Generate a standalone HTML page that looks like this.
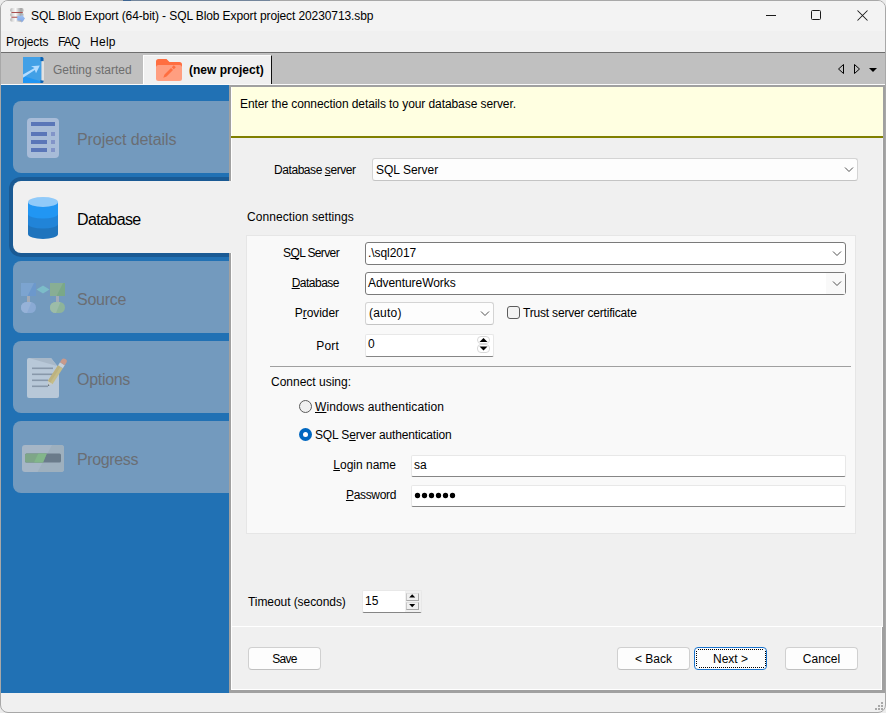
<!DOCTYPE html>
<html><head><meta charset="utf-8">
<style>
*{box-sizing:border-box;margin:0;padding:0}
html,body{width:886px;height:713px;overflow:hidden;background:#ececec;font-family:"Liberation Sans",sans-serif;font-size:12px;color:#000}
.a{position:absolute}
.t{position:absolute;white-space:nowrap;line-height:14px;height:14px}
.r{text-align:right}
#win{left:0;top:0;width:886px;height:713px;border:1px solid #a8a8a8;border-radius:8px;background:#f0f0f0;overflow:hidden}
u{text-decoration:underline;text-decoration-thickness:1px;text-underline-offset:1px;text-decoration-skip-ink:none}
.item{position:absolute;left:13px;width:216px;height:72px;background:#739abe;border-radius:8px 0 0 8px}
.stxt{position:absolute;left:77px;font-size:16px;line-height:18px;color:#6a6e74;white-space:nowrap;letter-spacing:-0.3px}
.combo{position:absolute;background:#fff;border:1px solid #7a7a7a;border-radius:3px}
.combo2{position:absolute;background:#fdfdfd;border:1px solid #d4d4d4;border-bottom-color:#c4c4c4;border-radius:3px}
.edit{position:absolute;background:#fff;border:1px solid #e8e8e8;border-bottom:1px solid #868686;border-radius:2px}
.btn{position:absolute;height:23px;background:#fdfdfd;border:1px solid #d0d0d0;border-bottom-color:#c0c0c0;border-radius:4px;text-align:center;line-height:20px}
.chev{position:absolute;width:10px;height:6px}
</style></head><body>
<div id="win" class="a"></div>
<div class="a" style="left:123px;top:0;width:8px;height:1px;background:#3d6592"></div>
<div class="a" style="left:131px;top:0;width:139px;height:1px;background:#74869c"></div>
<!-- title bar -->
<div class="a" style="left:1px;top:1px;width:884px;height:51px;background:#f3f3f3;border-radius:7px 7px 0 0"></div>
<div class="a" style="left:1px;top:31px;width:884px;height:21px;background:#f0f0f0"></div>
<svg class="a" style="left:8px;top:6px" width="20" height="20" viewBox="0 0 20 20">
  <defs><linearGradient id="disc" x1="0" x2="1"><stop offset="0" stop-color="#b0b0b0"/><stop offset=".18" stop-color="#dcdcdc"/><stop offset=".4" stop-color="#fbfbfb"/><stop offset=".62" stop-color="#c8c8c8"/><stop offset=".8" stop-color="#a4a4a4"/><stop offset="1" stop-color="#c4c4c4"/></linearGradient>
  <linearGradient id="arr" x1="0" y1="0" x2="0" y2="1"><stop offset="0" stop-color="#a8c8f4"/><stop offset="1" stop-color="#7aa2e8"/></linearGradient></defs>
  <rect x="2.2" y="2.1" width="13.5" height="4.2" rx="1.8" fill="url(#disc)"/>
  <rect x="2.2" y="6.9" width="13.5" height="3.8" rx="1.6" fill="url(#disc)"/>
  <rect x="2.2" y="11.8" width="13.5" height="4" rx="1.8" fill="url(#disc)"/>
  <rect x="3.4" y="6" width="11.4" height="1" fill="#a85050"/>
  <rect x="3.4" y="10.7" width="11.4" height="1.1" fill="#b05858"/>
  <path d="M9.3 9.8h4.2V8.1l3.5 4.3-3.5 4.4v-2.2H9.3z" fill="url(#arr)"/>
</svg>
<div class="t" style="letter-spacing:-0.1px;left:31px;top:9px;color:#000">SQL Blob Export (64-bit) - SQL Blob Export project 20230713.sbp</div>
<!-- window buttons -->
<div class="a" style="left:766px;top:15px;width:10px;height:1px;background:#1a1a1a"></div>
<div class="a" style="left:811px;top:10px;width:10px;height:10px;border:1px solid #1a1a1a;border-radius:1.5px"></div>
<svg class="a" style="left:857px;top:10px" width="11" height="11" viewBox="0 0 11 11"><path d="M.5 .5L10.5 10.5M10.5 .5L.5 10.5" stroke="#1a1a1a" stroke-width="1.05"/></svg>
<!-- menu -->
<div class="t" style="letter-spacing:-0.13px;left:6px;top:35px">Projects</div>
<div class="t" style="letter-spacing:-0.85px;left:58px;top:35px">FAQ</div>
<div class="t" style="letter-spacing:0.27px;left:90px;top:35px">Help</div>
<!-- tab bar -->
<div class="a" style="left:1px;top:52px;width:884px;height:1px;background:#6e6e6e"></div>
<div class="a" style="left:1px;top:53px;width:884px;height:31px;background:#c0c0c0"></div>
<div class="a" style="left:1px;top:84px;width:884px;height:1px;background:#fafafa"></div>
<!-- getting started icon -->
<svg class="a" style="left:23px;top:57px" width="22" height="27" viewBox="0 0 22 27">
  <rect x="0" y="0" width="18.5" height="26" fill="#2196f3"/>
  <path d="M0 0h18.5v24.5L0 19z" fill="#42a0e6"/>
  <path d="M17.5 0h1.5a1.5 1.5 0 0 1 1.5 1.5V4h-3z" fill="#0d62b2"/>
  <path d="M17.5 23h3v1.5a1.5 1.5 0 0 1-1.5 1.5h-1.5z" fill="#0d62b2"/>
  <rect x="18.5" y="4.5" width="2.5" height="19" fill="#e2e2e2"/>
  <path d="M0 17.5L11.5 11l-3.5-1.8 8.8-.8-3.8 7.8-1.2-3.2L0 20.8z" fill="#b3dcff"/>
</svg>
<div class="t" style="left:53px;top:63px;color:#6e6e6e">Getting started</div>
<!-- active tab -->
<div class="a" style="left:143px;top:55px;width:129px;height:29px;background:#f0f0f0;border-left:1px solid #fff;border-top:1px solid #fafafa;border-right:1px solid #101010"></div>
<svg class="a" style="left:156px;top:59px" width="26" height="22" viewBox="0 0 26 22">
  <path d="M0 2.5a2.5 2.5 0 0 1 2.5-2.5h8l3 3h10a2.5 2.5 0 0 1 2.5 2.5V8H0z" fill="#ff6e40"/>
  <rect x="0" y="6" width="26" height="16" rx="2.5" fill="#ff9e80"/>
  <path d="M10.5 17.5L17 11 15 9 8.5 15.5z M10.5 17.5L8.5 15.5 7.3 18.7z M17.8 10.2L19.8 8.2 17.8 6.2 15.8 8.2z" fill="#ff6e40"/>
</svg>
<div class="t" style="left:189px;top:63px;font-weight:bold">(new project)</div>
<!-- tab arrows -->
<svg class="a" style="left:836px;top:63px" width="44" height="12" viewBox="0 0 44 12">
  <path d="M7.5 1.5v9L2.5 6z" fill="none" stroke="#000" stroke-width="1"/>
  <path d="M18.5 1.5v9l5-4.5z" fill="none" stroke="#000" stroke-width="1"/>
  <path d="M33 5h8l-4 4z" fill="#000"/>
</svg>
<!-- sidebar -->
<div class="a" style="left:1px;top:85px;width:228px;height:608px;background:#2171b4"></div>
<div class="item" style="top:101px"></div>
<div class="a" style="left:9px;top:177px;width:230px;height:80px;background:#1a5a94;border-radius:12px 0 0 12px"></div>
<div class="item" style="top:181px;background:#f0f0f0;width:220px"></div>
<div class="item" style="top:261px"></div>
<div class="item" style="top:341px"></div>
<div class="item" style="top:421px"></div>
<!-- icons -->
<svg class="a" style="left:27px;top:118px" width="32" height="40" viewBox="0 0 32 40">
  <rect width="32" height="40" rx="4" fill="#a8bcd8"/>
  <rect x="4" y="4" width="24" height="4" fill="#5a76b8"/>
  <rect x="4" y="14" width="16" height="4" fill="#5a76b8"/>
  <rect x="4" y="22" width="16" height="4" fill="#5a76b8"/>
  <rect x="4" y="30" width="16" height="4" fill="#5a76b8"/>
  <rect x="24" y="14" width="4" height="4" fill="#8294c8"/>
  <rect x="24" y="22" width="4" height="4" fill="#8294c8"/>
  <rect x="24" y="30" width="4" height="4" fill="#8294c8"/>
</svg>
<svg class="a" style="left:28px;top:197px" width="30" height="43" viewBox="0 0 30 43">
  <path d="M0 5v32a15 5 0 0 0 30 0V5z" fill="#1f74bd"/>
  <path d="M0 5v22a15 4.5 0 0 0 30 0V5z" fill="#2184d8"/>
  <path d="M0 5v12a15 4.5 0 0 0 30 0V5z" fill="#2196f3"/>
  <ellipse cx="15" cy="5" rx="15" ry="5" fill="#90caf9"/>
</svg>
<svg class="a" style="left:21px;top:283px" width="45" height="30" viewBox="0 0 45 30">
  <rect x="0" y="0" width="15" height="13" fill="#6c98cc"/>
  <path d="M0 0h13L6.5 13H0z" fill="#7ca4d0"/>
  <path d="M15.5 6.5L22 2.5l6.5 4-6.5 4z" fill="#7cbcc8"/>
  <rect x="29" y="0" width="15" height="13" fill="#7aa888"/>
  <path d="M29 0h13l-6.5 13H29z" fill="#88ae94"/>
  <rect x="6" y="13" width="3" height="7" fill="#a2aab6"/>
  <rect x="35" y="13" width="3" height="7" fill="#a2aab6"/>
  <rect x="0" y="19" width="15" height="11" rx="5.5" fill="#8aaad4"/>
  <path d="M5.5 19h5L6 30H5.5A5.5 5.5 0 0 1 5.5 19z" fill="#96b2d8"/>
  <rect x="29" y="19" width="15" height="11" rx="5.5" fill="#8eb49a"/>
  <path d="M34.5 19h5L35 30h-.5a5.5 5.5 0 0 1 0-11z" fill="#9cbca8"/>
</svg>
<svg class="a" style="left:27px;top:356px" width="42" height="44" viewBox="0 0 42 44">
  <path d="M2 2h22l8 10v28a2 2 0 0 1-2 2H2a2 2 0 0 1-2-2V4a2 2 0 0 1 2-2z" fill="#b8c8d8"/>
  <path d="M2 2h22l6 8z" fill="#a8b8c8"/>
  <rect x="5" y="11.5" width="21" height="1.6" fill="#8898aa"/>
  <rect x="5" y="17.5" width="21" height="1.6" fill="#8898aa"/>
  <rect x="5" y="23.5" width="16" height="1.6" fill="#8898aa"/>
  <rect x="5" y="29.5" width="16" height="1.6" fill="#8898aa"/>
  <path d="M25.52 28.16L20.82 25.12 31.14 9.18 35.84 12.22z" fill="#c4bc88"/>
  <path d="M23.17 26.64L20.82 25.12 31.14 9.18 33.49 10.7z" fill="#bcb280"/>
  <path d="M25.52 28.16L20.82 25.12 21 30z" fill="#c8ccc8"/>
  <path d="M22.57 29.23L21.06 28.25 21 30z" fill="#505a66"/>
  <path d="M35.84 12.22L31.14 9.18 33.04 6.25 37.74 9.29z" fill="#c8d0d8"/>
  <path d="M37.74 9.29L33.04 6.25 34.6 3.8a2.8 2.8 0 0 1 4.7 3.05z" fill="#c89a8c"/>
</svg>
<svg class="a" style="left:22px;top:445px" width="42" height="27" viewBox="0 0 42 27">
  <rect width="42" height="27" rx="3" fill="#a6b6c6"/>
  <path d="M30 0h9a3 3 0 0 1 3 3v21a3 3 0 0 1-3 3H15.5z" fill="#9eb0be"/>
  <rect x="3" y="8.5" width="36" height="9" rx="1.5" fill="#6a7b8a"/>
  <path d="M4.5 8.5h20.3l-3.8 9H4.5a1.5 1.5 0 0 1-1.5-1.5v-6a1.5 1.5 0 0 1 1.5-1.5z" fill="#7ea688"/>
  <path d="M16.3 8.5h8.5l-3.8 9h-9z" fill="#82b68a"/>
</svg>
<div class="stxt" style="letter-spacing:-0.07px;top:131px;">Project details</div>
<div class="stxt" style="letter-spacing:-0.61px;top:211px;color:#000;">Database</div>
<div class="stxt" style="letter-spacing:-0.24px;top:291px;">Source</div>
<div class="stxt" style="top:371px;">Options</div>
<div class="stxt" style="letter-spacing:-0.37px;top:451px;">Progress</div>
<!-- content panel frame -->
<div class="a" style="left:229px;top:85px;width:656px;height:608px;border-top:2px solid #a0a0a0;border-left:2px solid #a0a0a0;border-right:3px solid #a0a0a0;border-bottom:3px solid #a0a0a0"></div>
<div class="a" style="left:231px;top:87px;width:651px;height:603px;border:1px solid #fff;background:#f0f0f0"></div>
<div class="a" style="left:232px;top:88px;width:651px;height:538px;background:#f0f0f0;border-right:1px solid #f6f6f6"></div>
<div class="a" style="left:229px;top:181px;width:3px;height:72px;background:#f0f0f0"></div>
<!-- header -->
<div class="a" style="left:232px;top:87px;width:651px;height:49px;background:#ffffe1"></div>
<div class="a" style="left:231px;top:136px;width:652px;height:2px;background:#808000"></div>
<div class="t" style="letter-spacing:-0.08px;left:240px;top:97px">Enter the connection details to your database server.</div>
<!-- database server -->
<div class="t" style="letter-spacing:-0.43px;left:274px;top:163px">Database <u>s</u>erver</div>
<div class="combo2" style="left:372px;top:158px;width:486px;height:23px"></div>
<div class="t" style="left:376px;top:163px">SQL Server</div>
<svg class="chev" style="left:844px;top:167px" viewBox="0 0 10 6"><path d="M1 .5l4 4 4-4" fill="none" stroke="#505050" stroke-width="1"/></svg>
<div class="t" style="letter-spacing:0.08px;left:247px;top:210px">Connection settings</div>
<!-- group -->
<div class="a" style="left:246px;top:235px;width:610px;height:299px;background:#f9f9f9;border:1px solid #e6e6e6"></div>
<div class="t r" style="letter-spacing:-0.63px;left:239px;width:100px;top:246px">S<u>Q</u>L Server</div>
<div class="combo" style="left:365px;top:242px;width:481px;height:23px"></div>
<div class="t" style="letter-spacing:-0.06px;left:368px;top:246px">.\sql2017</div>
<svg class="chev" style="left:832px;top:251px" viewBox="0 0 10 6"><path d="M1 .5l4 4 4-4" fill="none" stroke="#505050" stroke-width="1"/></svg>
<div class="t r" style="letter-spacing:-0.5px;left:239px;width:100px;top:276px"><u>D</u>atabase</div>
<div class="combo" style="left:365px;top:272px;width:481px;height:23px"></div>
<div class="t" style="letter-spacing:-0.06px;left:368px;top:276px">AdventureWorks</div>
<div class="a" style="left:826px;top:273px;width:19px;height:21px;background:#f9f9f9"></div>
<svg class="chev" style="left:832px;top:281px" viewBox="0 0 10 6"><path d="M1 .5l4 4 4-4" fill="none" stroke="#505050" stroke-width="1"/></svg>
<div class="t r" style="letter-spacing:-0.07px;left:239px;width:100px;top:306px">P<u>r</u>ovider</div>
<div class="combo2" style="left:365px;top:302px;width:129px;height:23px"></div>
<div class="t" style="letter-spacing:0.22px;left:369px;top:306px">(auto)</div>
<svg class="chev" style="left:480px;top:311px" viewBox="0 0 10 6"><path d="M1 .5l4 4 4-4" fill="none" stroke="#505050" stroke-width="1"/></svg>
<div class="a" style="left:507px;top:306px;width:13px;height:13px;border:1px solid #5c5c5c;border-radius:3px;background:#f3f3f3"></div>
<div class="t" style="letter-spacing:-0.19px;left:523px;top:306px">Trust server certificate</div>
<div class="t r" style="letter-spacing:0.17px;left:239px;width:100px;top:339px">Port</div>
<div class="edit" style="left:365px;top:334px;width:129px;height:23px"></div>
<div class="t" style="left:368px;top:337px">0</div>
<svg class="a" style="left:477px;top:336px" width="13" height="17" viewBox="0 0 13 17">
  <rect x=".5" y=".5" width="12" height="7" rx="3.5" fill="#fff" stroke="#d8d8d8"/>
  <rect x=".5" y="8.5" width="12" height="8" rx="3.5" fill="#fff" stroke="#d8d8d8"/>
  <path d="M2.5 6h8l-4-4z" fill="#000"/>
  <path d="M2.5 10.5h8l-4 4z" fill="#000"/>
</svg>
<div class="a" style="left:270px;top:366px;width:581px;height:1px;background:#a0a0a0"></div>
<div class="t" style="left:271px;top:375px">Connect using:</div>
<div class="a" style="left:299px;top:400px;width:13px;height:13px;border:1px solid #5c5c5c;border-radius:50%;background:#f0f0f0"></div>
<div class="t" style="letter-spacing:0.1px;left:315px;top:400px"><u>W</u>indows authentication</div>
<div class="a" style="left:299px;top:428px;width:13px;height:13px;border-radius:50%;background:#0067c0"></div>
<div class="a" style="left:303px;top:432px;width:5px;height:5px;border-radius:50%;background:#fff"></div>
<div class="t" style="letter-spacing:-0.15px;left:315px;top:428px">SQL S<u>e</u>rver authentication</div>
<div class="t r" style="left:296px;width:100px;top:458px"><u>L</u>ogin name</div>
<div class="edit" style="left:411px;top:455px;width:435px;height:22px"></div>
<div class="t" style="left:414px;top:458px">sa</div>
<div class="t r" style="letter-spacing:-0.33px;left:296px;width:100px;top:488px"><u>P</u>assword</div>
<div class="edit" style="left:411px;top:485px;width:435px;height:22px"></div>
<svg class="a" style="left:414px;top:492px" width="45" height="7" viewBox="0 0 45 7">
  <circle cx="3.5" cy="3.5" r="2.65"/><circle cx="10.5" cy="3.5" r="2.65"/><circle cx="17.5" cy="3.5" r="2.65"/><circle cx="24.5" cy="3.5" r="2.65"/><circle cx="31.5" cy="3.5" r="2.65"/><circle cx="38.5" cy="3.5" r="2.65"/>
</svg>
<!-- timeout -->
<div class="t" style="letter-spacing:-0.07px;left:248px;top:595px">Timeout (seconds)</div>
<div class="edit" style="left:362px;top:590px;width:60px;height:23px"></div>
<div class="a" style="left:405px;top:591px;width:16px;height:21px;background:#f0f0f0"></div>
<div class="t" style="left:365px;top:594px">15</div>
<div class="a" style="left:406px;top:593px;width:13px;height:8px;background:#f0f0f0;border:1px solid #a8a8a8;border-top-color:#e0e0e0;border-left-color:#c8c8c8"></div>
<div class="a" style="left:406px;top:602px;width:13px;height:8px;background:#f0f0f0;border:1px solid #a8a8a8;border-top-color:#e0e0e0;border-left-color:#c8c8c8"></div>
<svg class="a" style="left:406px;top:593px" width="13" height="17" viewBox="0 0 13 17">
  <path d="M3.2 4.5h6l-3-3.2z" fill="#000"/>
  <path d="M3.2 11h6l-3 3.2z" fill="#000"/>
</svg>
<div class="a" style="left:231px;top:626px;width:652px;height:1px;background:#fff"></div>
<!-- buttons -->
<div class="btn" style="left:248px;top:647px;width:73px"></div>
<div class="t" style="letter-spacing:-0.7px;left:248px;width:73px;top:652px;text-align:center">Save</div>
<div class="btn" style="left:617px;top:647px;width:73px"></div>
<div class="t" style="left:617px;width:73px;top:652px;text-align:center">&lt; Back</div>
<div class="btn" style="left:694px;top:647px;width:73px;border-color:#1a73cc"></div>
<svg class="a" style="left:696px;top:649px" width="70" height="19" viewBox="0 0 70 19"><path d="M2 .5h66M69.5 2v15M68 18.5H2M.5 17V2" stroke="#000" stroke-width="1" stroke-dasharray="1 1" fill="none" shape-rendering="crispEdges"/><path d="M1 1.5h.01M68.5 1.5h.01M68.5 17.5h.01M1.5 17.5h.01" stroke="#000" stroke-width="1" fill="none"/></svg>
<div class="t" style="left:694px;width:73px;top:652px;text-align:center">Next &gt;</div>
<div class="btn" style="left:785px;top:647px;width:73px"></div>
<div class="t" style="left:785px;width:73px;top:652px;text-align:center">Cancel</div>
<!-- size grip -->
<svg class="a" style="left:875px;top:702px" width="10" height="10" viewBox="0 0 10 10" fill="#a8a8a8">
  <rect x="6" y="0" width="2" height="2"/><rect x="3" y="3" width="2" height="2"/><rect x="6" y="3" width="2" height="2"/>
  <rect x="0" y="6" width="2" height="2"/><rect x="3" y="6" width="2" height="2"/><rect x="6" y="6" width="2" height="2"/>
</svg>
</body></html>
